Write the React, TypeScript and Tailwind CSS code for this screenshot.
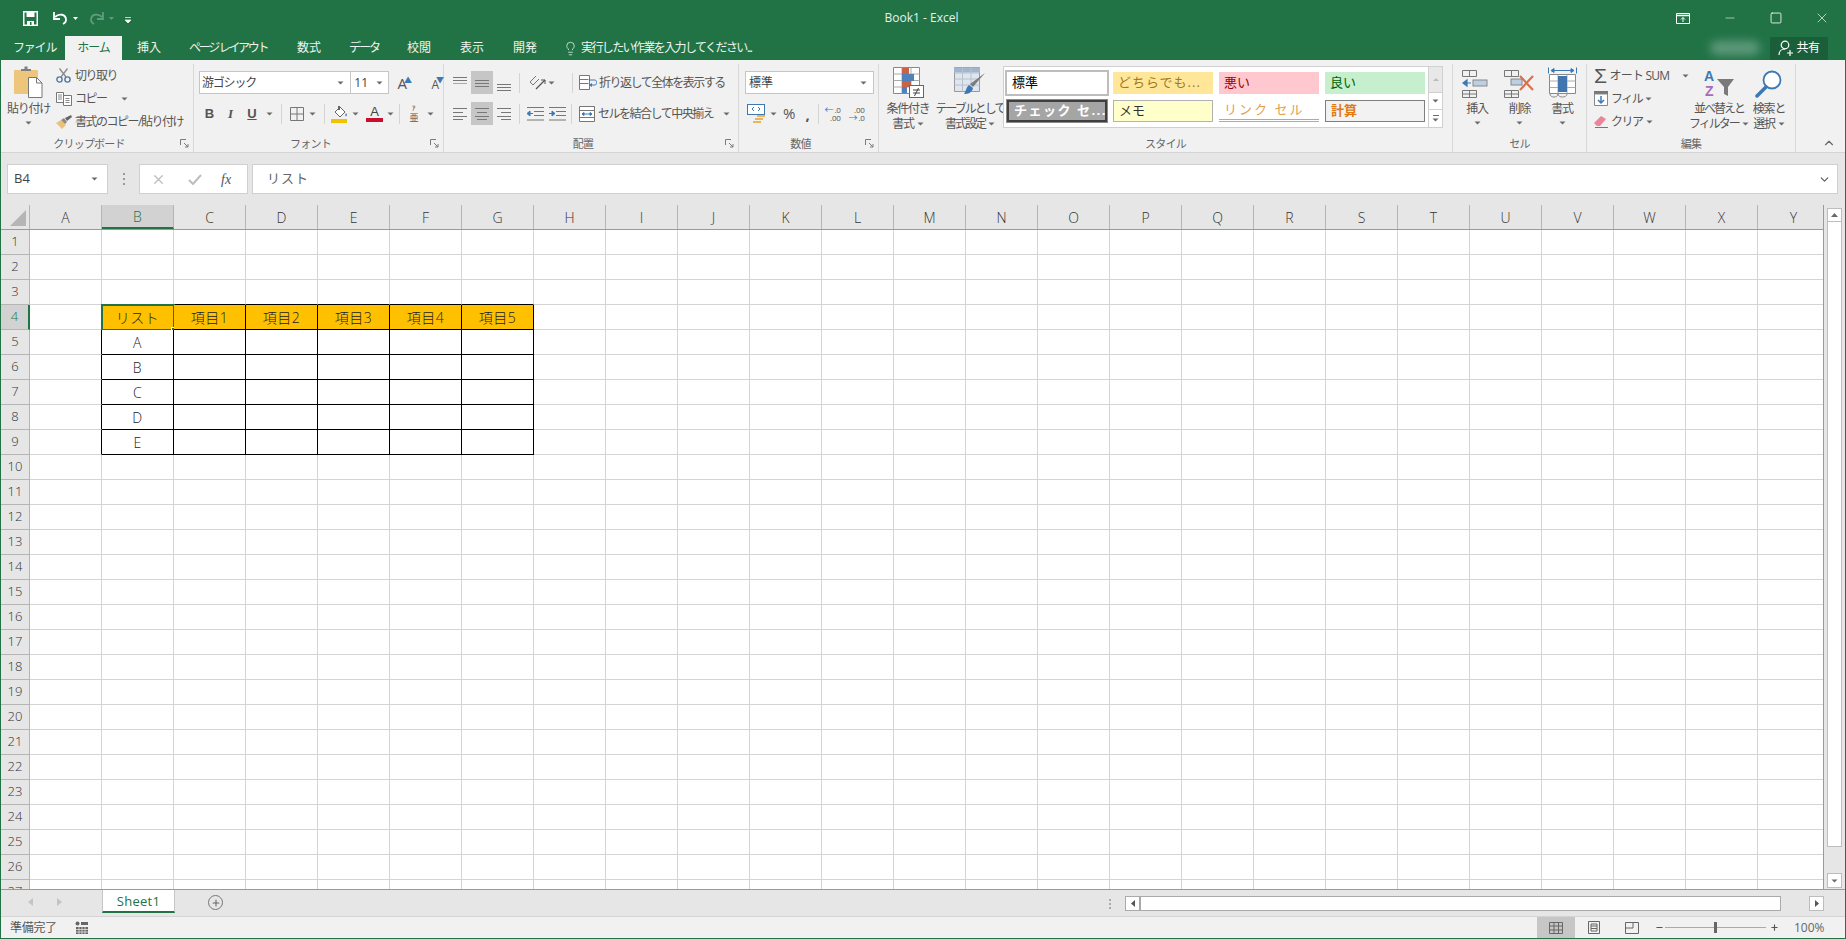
import type { ReactNode } from 'react';
import { ChevronDown, ChevronUp, Lightbulb, Minus, Plus, Square, X } from 'lucide-react';

const COLUMNS = 'ABCDEFGHIJKLMNOPQRSTUVWXY'.split('');
const ROWS = Array.from({ length: 27 }, (_, i) => i + 1);
const HEADERS = ['リスト', '項目1', '項目2', '項目3', '項目4', '項目5'];
const LIST_ITEMS = ['A', 'B', 'C', 'D', 'E'];

function Caret({ className = '' }: { className?: string }) {
  return (
    <svg width="7" height="4" viewBox="0 0 7 4" className={`shrink-0 ${className}`}>
      <path d="M0.5 0.5h6L3.5 3.5z" fill="#6a6a6a" />
    </svg>
  );
}

function Launcher() {
  return (
    <svg width="9" height="9" viewBox="0 0 9 9" className="absolute bottom-[4px] right-[4px]">
      <path d="M0.5 6V0.5H6M4 4l4 4M8 5v3H5" fill="none" stroke="#7a7a7a" strokeWidth="1" />
    </svg>
  );
}

function Group({
  className,
  label,
  launcher = false,
  children,
}: {
  className: string;
  label: string;
  launcher?: boolean;
  children: ReactNode;
}) {
  return (
    <div className={`relative flex h-[88px] shrink-0 flex-col border-r border-[#d8d8d8] ${className}`}>
      <div className="h-[72px] shrink-0">{children}</div>
      <div
        className={`flex flex-1 items-center justify-center text-[11px] tracking-[-0.8px] text-[#666] ${
          launcher ? 'pr-[16px]' : ''
        }`}
      >
        {label}
      </div>
      {launcher && <Launcher />}
    </div>
  );
}

function Sep({ className = 'ml-[5px]' }: { className?: string }) {
  return <div className={`h-[20px] w-px shrink-0 bg-[#d4d4d4] ${className}`} />;
}

function BigButton({
  icon,
  lines,
  className = '',
  caretBelow = false,
  tight = false,
}: {
  icon: ReactNode;
  lines: ReactNode[];
  className?: string;
  caretBelow?: boolean;
  tight?: boolean;
}) {
  return (
    <div className={`flex shrink-0 flex-col items-center ${className}`}>
      <div className="flex h-[34px] items-end justify-center">{icon}</div>
      <div
        className={`mt-[3px] flex flex-col items-center text-[12px] leading-[15px] text-[#555] ${
          tight ? 'tracking-[-2px]' : 'tracking-[-1.200px]'
        }`}
      >
        {lines.map((line, i) => (
          <div key={i} className="flex items-center gap-[3px] whitespace-nowrap">
            {line}
          </div>
        ))}
      </div>
      {caretBelow && <Caret className="mt-[5px]" />}
    </div>
  );
}

function AlignV({ pos }: { pos: 'top' | 'middle' | 'bottom' }) {
  const y = pos === 'top' ? [2, 5, 8] : pos === 'middle' ? [5, 8, 11] : [9, 12, 15];
  return (
    <svg width="14" height="16" viewBox="0 0 14 16">
      {y.map((v, i) => (
        <path key={v} d={`M0 ${v + 0.5}h14`} stroke={i === 2 && pos === 'top' ? '#aaa' : '#777'} strokeWidth="1" />
      ))}
    </svg>
  );
}

function AlignH({ pos }: { pos: 'left' | 'center' | 'right' }) {
  const rows =
    pos === 'left'
      ? ['M0 2.5h14', 'M0 6.5h10', 'M0 10.5h14', 'M0 13.5h10']
      : pos === 'center'
        ? ['M0 2.5h14', 'M2 6.5h10', 'M0 10.5h14', 'M2 13.5h10']
        : ['M0 2.5h14', 'M4 6.5h10', 'M0 10.5h14', 'M4 13.5h10'];
  return (
    <svg width="14" height="16" viewBox="0 0 14 16">
      {rows.map((d) => (
        <path key={d} d={d} stroke="#777" strokeWidth="1" />
      ))}
    </svg>
  );
}

function PasteIcon() {
  return (
    <svg width="29" height="32" viewBox="0 0 29 32">
      <rect x="0" y="4" width="24" height="24" rx="1" fill="#edc67c" />
      <path d="M7 5V3h3.5V0.5h3V3H17v2z" fill="#7f7f7f" />
      <path d="M14.5 11.5h8l5.5 5.5v14.5H14.5z" fill="#fff" stroke="#777" />
      <path d="M22.5 11.5V17H28" fill="none" stroke="#777" />
    </svg>
  );
}

function ScissorsIcon() {
  return (
    <svg width="15" height="15" viewBox="0 0 15 15">
      <path d="M5 9L11.500 0.500M10 9L3.500 0.500" stroke="#8a8a8a" strokeWidth="1.300" />
      <circle cx="3.500" cy="11.500" r="2.600" fill="none" stroke="#4f78a8" strokeWidth="1.400" />
      <circle cx="11.500" cy="11.500" r="2.600" fill="none" stroke="#4f78a8" strokeWidth="1.400" />
    </svg>
  );
}

function CopyIcon() {
  return (
    <svg width="16" height="14" viewBox="0 0 16 14">
      <path d="M0.500 0.500h7v10h-7zM7.500 3.500h8v10h-8z" fill="#fff" stroke="#777" />
      <path d="M2 3h4M2 5h4M2 7h4M9.500 6.500h4M9.500 8.500h4M9.500 10.500h4" stroke="#888" />
    </svg>
  );
}

function BrushIcon() {
  return (
    <svg width="16" height="14" viewBox="0 0 16 14">
      <path d="M0 8l5-3 5 5-4 4z" fill="#e9c27c" />
      <path d="M5 5l3-2 3 4-2 2z" fill="#8a8a8a" />
      <path d="M9 3l6-3 1 2-5 4z" fill="#666" />
    </svg>
  );
}

function FillColorIcon() {
  return (
    <svg width="18" height="18" viewBox="0 0 18 18">
      <path d="M4 7l5-5 5 5-5 5z" fill="#fff" stroke="#666" />
      <path d="M7 1h2v4H7z" fill="#666" />
      <path d="M15 8c1 1.500 1.500 2.500 0 3.500-1-1-1-2 0-3.500z" fill="#4f81bd" />
      <rect x="0" y="14" width="16" height="4" fill="#f2c200" />
    </svg>
  );
}

function OrientationIcon() {
  return (
    <svg width="18" height="16" viewBox="0 0 18 16">
      <path d="M2 7l6-6M5 10l6-6M2 7l3 3" stroke="#777" fill="none" />
      <path d="M8 14L17 5" stroke="#555" strokeWidth="1.200" />
      <path d="M13 5h4v4" stroke="#555" fill="none" />
    </svg>
  );
}

function IndentIcon({ increase = false }: { increase?: boolean }) {
  return (
    <svg width="17" height="14" viewBox="0 0 17 14">
      <path d="M0 0.500h17M7 4.500h10M7 8.500h10M0 13h17" stroke="#777" />
      <path
        d={increase ? 'M0 6.500h4M3 4l3 2.500L3 9z' : 'M6 6.500H2M3 4L0 6.500 3 9z'}
        stroke="#3d78b5"
        fill="#3d78b5"
      />
    </svg>
  );
}

function WrapIcon() {
  return (
    <svg width="18" height="16" viewBox="0 0 18 16">
      <path d="M0.500 0.500h10v14h-10z" fill="#fff" stroke="#777" />
      <path d="M0.500 4.500h9M0.500 8.500h9" stroke="#777" />
      <path d="M10 5h6c2 0 2 5 0 5h-4" fill="none" stroke="#3d78b5" />
      <path d="M13 8l-3 2 3 2z" fill="#3d78b5" />
    </svg>
  );
}

function MergeIcon() {
  return (
    <svg width="16" height="16" viewBox="0 0 16 16">
      <path d="M0.500 0.500h15v15h-15z" fill="#fff" stroke="#777" />
      <path d="M0.500 4.500h15M0.500 11.500h15" stroke="#777" />
      <path d="M3 8h10M3 8l2-1.500v3zM13 8l-2-1.500v3z" stroke="#3d78b5" fill="#3d78b5" />
    </svg>
  );
}

function CurrencyIcon() {
  return (
    <svg width="18" height="20" viewBox="0 0 18 20">
      <rect x="0.500" y="0.500" width="17" height="10" fill="#fff" stroke="#3d78b5" />
      <path d="M7 3l-2 2 2 2M11 3l2 2-2 2" fill="none" stroke="#3d78b5" />
      <rect x="10" y="11" width="8" height="2" fill="#e9b65e" />
      <rect x="8" y="14" width="8" height="2" fill="#e9b65e" />
      <rect x="6" y="17" width="8" height="2" fill="#e9b65e" />
    </svg>
  );
}

function DecimalIcon({ increase = false }: { increase?: boolean }) {
  return (
    <div className="relative flex h-[16px] w-[16px] flex-col items-end text-[8px] leading-[8px] tracking-[-0.2px] text-[#555]">
      <span className="flex items-center">
        {increase && <span className="mr-px text-[9px] leading-[8px] text-[#3d78b5]">←</span>}
        {increase ? '.0' : '.00'}
      </span>
      <span className="flex items-center">
        {!increase && <span className="mr-px text-[9px] leading-[8px] text-[#3d78b5]">→</span>}
        {increase ? '.00' : '.0'}
      </span>
    </div>
  );
}

function CondFormatIcon() {
  return (
    <svg width="31" height="31" viewBox="0 0 31 31">
      <path d="M0.500 0.500h26v26h-26z" fill="#fff" stroke="#888" />
      <path d="M9 0.500v26M18 0.500v26M0.500 7h26M0.500 13.500h26M0.500 20h26" stroke="#aaa" />
      <rect x="9" y="1" width="7" height="6" fill="#c8634a" />
      <rect x="9" y="7" width="12" height="7" fill="#4f81bd" />
      <rect x="9" y="14" width="9" height="6" fill="#c8634a" />
      <rect x="9" y="20" width="5" height="6" fill="#4f81bd" />
      <rect x="16.500" y="18.500" width="14" height="12" fill="#fff" stroke="#666" />
      <path d="M20 23h7M20 26h7M25.500 21l-4 8" stroke="#444" />
    </svg>
  );
}

function TableFormatIcon() {
  return (
    <svg width="32" height="31" viewBox="0 0 32 31">
      <path d="M0.500 0.500h25v24h-25z" fill="#dfe6ef" stroke="#999" />
      <path d="M0 0.500h26v5H0z" fill="#9fb6cf" />
      <path d="M8.500 0.500v24M17 0.500v24M0.500 6h25M0.500 12h25M0.500 18h25" stroke="#b8c2cd" />
      <path d="M31 6L19 20l-3-3z" fill="#7d7d7d" />
      <path d="M15 18l4 3c-1 5-5 6-9 6 2-2 2-7 5-9z" fill="#3d78b5" />
    </svg>
  );
}

function CellsIcon({ kind }: { kind: 'insert' | 'delete' }) {
  return (
    <svg width="31" height="28" viewBox="0 0 31 28">
      <path d="M0.500 0.500h14v6h-14zM7.500 0.500v6M0.500 20.500h14v7h-14zM7.500 20.500v7M0.500 24h14" fill="none" stroke="#777" />
      {kind === 'insert' ? (
        <>
          <rect x="11" y="10" width="14" height="6" fill="#bccfe3" stroke="#888" />
          <path d="M9 13H1M1 13l4-3v6z" stroke="#3d78b5" fill="#3d78b5" strokeWidth="1.200" />
        </>
      ) : (
        <>
          <rect x="7" y="9" width="11" height="6" fill="#bccfe3" stroke="#888" />
          <path d="M16 6l13 14M29 6L16 20" stroke="#d9714f" strokeWidth="2.200" />
        </>
      )}
    </svg>
  );
}

function CellFormatIcon() {
  return (
    <svg width="29" height="31" viewBox="0 0 29 31">
      <path d="M0.500 0.500v6M28.500 0.500v6M3 3.500h23M3 3.500l3-2v4zM26 3.500l-3-2v4z" fill="#3d78b5" stroke="#3d78b5" />
      <path d="M1.500 7.500h26v19h-26z" fill="#fff" stroke="#888" />
      <path d="M10 7.500v19M19 7.500v19M1.500 14h26M1.500 20.500h26" stroke="#aaa" />
      <rect x="10" y="9" width="9" height="16" fill="#4274ad" />
      <path d="M2 27c0 4 8 4 8 0M10 27c0 4 9 4 9 0" fill="none" stroke="#888" />
    </svg>
  );
}

function SortIcon() {
  return (
    <svg width="30" height="29" viewBox="0 0 30 29">
      <text x="0" y="12" fontSize="14" fontWeight="700" fontFamily="Liberation Sans" fill="#3d78b5">
        A
      </text>
      <text x="1" y="27" fontSize="14" fontWeight="700" fontFamily="Liberation Sans" fill="#a56cb8">
        Z
      </text>
      <path d="M13 10h17l-6 8v9l-4-2v-7z" fill="#7a7a7a" />
    </svg>
  );
}

function SearchIcon() {
  return (
    <svg width="28" height="28" viewBox="0 0 28 28">
      <circle cx="17" cy="10" r="8.500" fill="#fff" stroke="#3d78b5" strokeWidth="1.800" />
      <path d="M11 17L2 26" stroke="#3d78b5" strokeWidth="3.500" strokeLinecap="round" />
    </svg>
  );
}

function TitleBar() {
  return (
    <div className="grid h-[36px] grid-cols-[1fr_auto_1fr] items-center text-white">
      <div className="flex items-center pl-[22px]">
        <svg width="15" height="15" viewBox="0 0 15 15">
          <path d="M0.750 0.750h13.500v13.500H0.750z" fill="none" stroke="#fff" strokeWidth="1.500" />
          <path d="M3.500 1h8v5h-8zM4 10h7v4.500H4z" fill="#fff" />
          <rect x="7" y="11" width="1.500" height="3" fill="#217346" />
        </svg>
        <svg width="17" height="15" viewBox="0 0 17 15" className="ml-[14px]">
          <path d="M3 6c4-4 11-3 11 3 0 2-1 3-3 4" fill="none" stroke="#fff" strokeWidth="1.800" />
          <path d="M2 1v7h6" fill="none" stroke="#fff" strokeWidth="1.800" />
        </svg>
        <svg width="5" height="3" viewBox="0 0 5 3" className="ml-[4px]">
          <path d="M0 0h5L2.500 3z" fill="#fff" />
        </svg>
        <svg width="17" height="15" viewBox="0 0 17 15" className="ml-[10px]">
          <path d="M14 6C10 2 3 3 3 9c0 2 1 3 3 4" fill="none" stroke="#5f9b7e" strokeWidth="1.800" />
          <path d="M15 1v7H9" fill="none" stroke="#5f9b7e" strokeWidth="1.800" />
        </svg>
        <svg width="5" height="3" viewBox="0 0 5 3" className="ml-[4px]">
          <path d="M0 0h5L2.500 3z" fill="#5f9b7e" />
        </svg>
        <svg width="6" height="6" viewBox="0 0 6 6" className="ml-[11px] mt-[3px]">
          <path d="M0 0.500h6M0 3h6L3 6z" fill="#fff" stroke="#fff" strokeWidth="0.700" />
        </svg>
      </div>
      <div className="pr-[3px] text-[12px] text-[#e6f0ea]">Book1 - Excel</div>
      <div className="flex items-center justify-end">
        <svg width="14" height="11" viewBox="0 0 14 11" className="mr-[17px]">
          <path d="M0.500 0.500h13v10h-13z" fill="none" stroke="#fff" />
          <path d="M0.500 2.500h13" stroke="#fff" strokeWidth="1.500" />
          <path d="M7 9V4.500M5 6.500l2-2 2 2" fill="none" stroke="#fff" />
        </svg>
        <div className="flex w-[46px] justify-center">
          <Minus size={14} strokeWidth={1} />
        </div>
        <div className="flex w-[46px] justify-center">
          <Square size={12} strokeWidth={1.500} className="scale-[1.1]" />
        </div>
        <div className="flex w-[46px] justify-center">
          <X size={16} strokeWidth={1} />
        </div>
      </div>
    </div>
  );
}

function TabBar() {
  return (
    <div className="relative flex h-[24px] items-center text-[12px] text-[#eef5f0]">
      <span className="ml-[12px] w-[52px] tracking-[-1.200px]">ファイル</span>
      <span className="flex h-full w-[57px] items-center justify-center bg-[#f1f1f1] tracking-[-1px] text-[#217346]">
        ホーム
      </span>
      <span className="ml-[15px] w-[52px]">挿入</span>
      <span className="w-[108px] tracking-[-2.300px]">ページ レイアウト</span>
      <span className="w-[52px]">数式</span>
      <span className="w-[58px] tracking-[-2px]">データ</span>
      <span className="w-[53px]">校閲</span>
      <span className="w-[53px]">表示</span>
      <span className="w-[50px]">開発</span>
      <Lightbulb size={15} strokeWidth={1.200} className="mr-[3px]" />
      <span className="tracking-[-1.600px]">実行したい作業を入力してください...</span>
      <div className="ml-auto mr-[17px] flex h-[23px] items-center">
        <div className="mr-[10px] h-[14px] w-[50px] rounded-full bg-[#5f9a7c] blur-[5px]" />
        <div className="flex h-full w-[58px] items-center justify-center gap-[2px] bg-[#1b5e3a] text-white">
          <svg width="16" height="16" viewBox="0 0 16 16">
            <circle cx="7" cy="5" r="3.800" fill="none" stroke="#fff" strokeWidth="1.200" />
            <path d="M1 15c0-4 3-6 6-6M9 13h6M12 10v6" fill="none" stroke="#fff" strokeWidth="1.200" />
          </svg>
          <span className="tracking-[-0.500px]">共有</span>
        </div>
      </div>
    </div>
  );
}

function StyleCell({ className, children }: { className: string; children: ReactNode }) {
  return (
    <div className={`flex h-[22px] w-[100px] shrink-0 items-center overflow-hidden whitespace-nowrap pl-[5px] text-[13px] ${className}`}>
      {children}
    </div>
  );
}

function Ribbon() {
  const rowText = 'text-[12px] tracking-[-1.500px] text-[#555] whitespace-nowrap';
  return (
    <div className="relative flex h-[93px] border-b border-[#d4d4d4] bg-[#f1f1f1] pt-[4px]">
      <Group className="w-[193px]" label="クリップボード" launcher>
        <div className="flex">
          <BigButton icon={<PasteIcon />} lines={['貼り付け']} caretBelow className="w-[55px]" />
          <div className={`flex flex-col ${rowText}`}>
            <div className="flex h-[23px] items-center gap-[4px]">
              <ScissorsIcon />
              切り取り
            </div>
            <div className="flex h-[23px] items-center gap-[3px]">
              <CopyIcon />
              コピー
              <Caret className="ml-[11px]" />
            </div>
            <div className="flex h-[24px] items-center gap-[3px]">
              <BrushIcon />
              書式のコピー/貼り付け
            </div>
          </div>
        </div>
      </Group>

      <Group className="w-[250px]" label="フォント" launcher>
        <div className="pl-[5px] pt-[7px]">
          <div className="flex h-[23px] items-center">
            <div className="flex h-full w-[157px] items-center justify-between border border-[#c6c6c6] bg-white pl-[2px] pr-[6px] text-[12px] tracking-[-1.200px] text-[#444]">
              游ゴシック
              <Caret />
            </div>
            <div className="ml-[-1px] flex h-full w-[40px] items-center justify-between border border-[#c6c6c6] bg-white pl-[3px] pr-[5px] text-[12px] text-[#444]">
              11
              <Caret />
            </div>
            <div className="ml-[8px] flex w-[47px] justify-between pr-[4px] text-[#555]">
              <span className="relative text-[15px] leading-[18px]">
                A<span className="absolute right-[-5px] top-[-3px] text-[8px] text-[#3d78b5]">▲</span>
              </span>
              <span className="relative mt-[3px] text-[12px] leading-[15px]">
                A<span className="absolute right-[-5px] top-[-5px] text-[8px] text-[#3d78b5]">▼</span>
              </span>
            </div>
          </div>
          <div className="mt-[8px] flex h-[23px] items-center font-['Liberation_Serif',serif] text-[13px] text-[#555]">
            <span className="w-[21px] text-center font-['Liberation_Sans',sans-serif] font-bold">B</span>
            <span className="w-[21px] text-center font-bold italic">I</span>
            <span className="w-[22px] text-center font-['Liberation_Sans',sans-serif] font-bold underline">U</span>
            <Caret className="ml-[3px]" />
            <Sep className="ml-[8px]" />
            <svg width="14" height="14" viewBox="0 0 14 14" className="ml-[8px]">
              <path d="M0.500 0.500h13v13H0.500zM7 0.500v13M0.500 7h13" fill="none" stroke="#777" />
            </svg>
            <Caret className="ml-[5px]" />
            <Sep className="ml-[8px]" />
            <div className="ml-[6px]">
              <FillColorIcon />
            </div>
            <Caret className="ml-[3px]" />
            <div className="ml-[7px] flex w-[17px] flex-col items-center font-['Liberation_Sans',sans-serif] text-[13px] leading-[13px] text-[#444]">
              A<span className="h-[4px] w-full bg-[#c8102e]" />
            </div>
            <Caret className="ml-[4px]" />
            <Sep className="ml-[5px]" />
            <div className="ml-[8px] flex w-[12px] flex-col items-center text-[7px] leading-[7px] text-[#555]">
              <span>ｱ</span>
              <span className="font-['Noto_Sans_CJK_JP',sans-serif] text-[9px] leading-[9px]">亜</span>
            </div>
            <Caret className="ml-[7px]" />
          </div>
        </div>
      </Group>

      <Group className="w-[295px]" label="配置" launcher>
        <div className="pl-[9px] pt-[7px]">
          <div className="flex h-[23px] items-center">
            <div className="flex w-[18px] justify-start"><AlignV pos="top" /></div>
            <div className="flex h-full w-[22px] items-center justify-center bg-[#c6c6c6]"><AlignV pos="middle" /></div>
            <div className="ml-[4px] flex w-[14px] justify-start"><AlignV pos="bottom" /></div>
            <Sep className="ml-[8px]" />
            <div className="ml-[8px]"><OrientationIcon /></div>
            <Caret className="ml-[2px]" />
            <Sep className="ml-[17px]" />
            <div className="ml-[6px] mr-[2px]"><WrapIcon /></div>
            <span className={rowText}>折り返して全体を表示する</span>
          </div>
          <div className="mt-[8px] flex h-[23px] items-center">
            <div className="flex w-[18px] justify-start"><AlignH pos="left" /></div>
            <div className="flex h-full w-[22px] items-center justify-center bg-[#c6c6c6]"><AlignH pos="center" /></div>
            <div className="ml-[4px] flex w-[14px] justify-start"><AlignH pos="right" /></div>
            <Sep className="ml-[8px]" />
            <div className="ml-[7px]"><IndentIcon /></div>
            <div className="ml-[5px]"><IndentIcon increase /></div>
            <Sep className="ml-[5px]" />
            <div className="ml-[7px] mr-[3px]"><MergeIcon /></div>
            <span className={rowText}>セルを結合して中央揃え</span>
            <Caret className="ml-[10px]" />
          </div>
        </div>
      </Group>

      <Group className="w-[140px]" label="数値" launcher>
        <div className="pl-[6px] pt-[7px]">
          <div className="flex h-[23px] w-[129px] items-center justify-between border border-[#c6c6c6] bg-white pl-[3px] pr-[6px] text-[12px] text-[#444]">
            標準
            <Caret />
          </div>
          <div className="mt-[8px] flex h-[23px] items-center pl-[2px]">
            <CurrencyIcon />
            <Caret className="ml-[5px]" />
            <span className="ml-[6px] text-[15px] text-[#555]">%</span>
            <span className="ml-[10px] text-[15px] font-bold leading-[12px] text-[#555]">,</span>
            <Sep className="ml-[8px]" />
            <div className="ml-[6px]"><DecimalIcon increase /></div>
            <div className="ml-[8px]"><DecimalIcon /></div>
          </div>
        </div>
      </Group>

      <Group className="w-[574px]" label="スタイル">
        <div className="flex">
          <BigButton
            icon={<CondFormatIcon />}
            lines={['条件付き', <>書式<Caret /></>]}
            className="w-[58px]"
          />
          <BigButton
            icon={<TableFormatIcon />}
            lines={['テーブルとして', <>書式設定<Caret /></>]}
            className="w-[66px]"
            tight
          />
          <div className="mt-[2px] flex h-[62px]">
            <div className="flex w-[426px] flex-wrap content-start gap-x-[6px] gap-y-[6px] border border-[#d0d0d0] bg-white pl-[3px] pt-[5px]">
              <StyleCell className="outline-2 outline-[#bdbdbd] bg-white text-black">標準</StyleCell>
              <StyleCell className="bg-[#ffe699] text-[#9c7a1f] tracking-[1px]">どちらでも...</StyleCell>
              <StyleCell className="bg-[#ffc7ce] text-[#9c0006]">悪い</StyleCell>
              <StyleCell className="bg-[#c6efce] text-[#006100]">良い</StyleCell>
              <StyleCell className="border-2 border-[#3f3f3f] bg-[#a5a5a5] font-bold tracking-[1.500px] text-white outline outline-[#8a8a8a]">
                チェック セ...
              </StyleCell>
              <StyleCell className="border border-[#b2b2b2] bg-[#ffffcc] text-[#333]">メモ</StyleCell>
              <StyleCell className="border-b-[3px] border-double border-[#e9a23b] tracking-[2px] text-[#e0a050]">
                リンク セル
              </StyleCell>
              <StyleCell className="border border-[#7f7f7f] bg-[#f2f2f2] font-bold text-[#e07b10]">計算</StyleCell>
            </div>
            <div className="ml-[-1px] flex w-[15px] flex-col border border-[#d0d0d0] bg-white">
              <div className="flex h-[25px] items-center justify-center bg-[#e8e8e8]">
                <svg width="6" height="3" viewBox="0 0 6 3"><path d="M0 3h6L3 0z" fill="#bbb" /></svg>
              </div>
              <div className="flex h-[18px] items-center justify-center border-y border-[#d0d0d0]"><Caret /></div>
              <div className="flex flex-1 flex-col items-center justify-center gap-[2px]">
                <span className="h-px w-[6px] bg-[#6a6a6a]" />
                <Caret />
              </div>
            </div>
          </div>
        </div>
      </Group>

      <Group className="w-[134px]" label="セル">
        <div className="flex pl-[3px]">
          <BigButton icon={<CellsIcon kind="insert" />} lines={['挿入']} caretBelow className="w-[42px]" />
          <BigButton icon={<CellsIcon kind="delete" />} lines={['削除']} caretBelow className="w-[43px]" />
          <BigButton icon={<CellFormatIcon />} lines={['書式']} caretBelow className="w-[42px]" />
        </div>
      </Group>

      <Group className="w-[209px]" label="編集">
        <div className="flex pl-[7px]">
          <div className={`flex w-[95px] flex-col ${rowText}`}>
            <div className="flex h-[23px] items-center gap-[4px]">
              <span className="font-['Liberation_Sans',sans-serif] text-[21px] leading-[20px] text-[#555]">Σ</span>
              <span className="tracking-[-0.800px]">オート SUM</span>
              <Caret className="ml-[9px]" />
            </div>
            <div className="flex h-[23px] items-center gap-[3px]">
              <svg width="14" height="15" viewBox="0 0 14 15">
                <rect x="0" y="0" width="14" height="3" fill="#777" />
                <path d="M0.500 3h13v11.500H0.500z" fill="#fff" stroke="#888" />
                <path d="M7 5v7M4 9l3 3 3-3" fill="none" stroke="#3d78b5" strokeWidth="1.500" />
              </svg>
              フィル
              <Caret />
            </div>
            <div className="flex h-[23px] items-center gap-[3px]">
              <svg width="14" height="13" viewBox="0 0 14 13">
                <path d="M0 8l7-7 5 3-6 7H3z" fill="#e8869a" />
                <path d="M1 12.500h13" stroke="#777" />
              </svg>
              クリア
              <Caret />
            </div>
          </div>
          <BigButton
            icon={<SortIcon />}
            lines={['並べ替えと', <>フィルター<Caret /></>]}
            className="w-[60px]"
            tight
          />
          <BigButton
            icon={<SearchIcon />}
            lines={['検索と', <>選択<Caret /></>]}
            className="w-[40px]"
          />
        </div>
      </Group>
      <ChevronUp size={14} strokeWidth={2} className="absolute bottom-[2px] right-[9px] text-[#666]" />
    </div>
  );
}

function FormulaBar() {
  return (
    <div className="flex h-[52px] bg-[#e6e6e6] pl-[6px] pr-[7px] pt-[11px]">
      <div className="flex h-[30px] w-[101px] items-center justify-between border border-[#d0d0d0] bg-white pl-[6px] pr-[9px] text-[13px] text-[#444]">
        B4
        <Caret />
      </div>
      <div className="flex h-[30px] w-[31px] flex-col items-center justify-center gap-[3px]">
        <span className="h-[2px] w-[2px] bg-[#999]" />
        <span className="h-[2px] w-[2px] bg-[#999]" />
        <span className="h-[2px] w-[2px] bg-[#999]" />
      </div>
      <div className="flex h-[30px] w-[109px] items-center border border-[#d0d0d0] bg-white pl-[11px] text-[#bdbdbd]">
        <X size={15} strokeWidth={2} />
        <svg width="14" height="11" viewBox="0 0 14 11" className="ml-[22px]">
          <path d="M1 6l4 4 8-9" fill="none" stroke="#bdbdbd" strokeWidth="2" />
        </svg>
        <span className="ml-[19px] font-['Liberation_Serif',serif] text-[14px] italic text-[#555]">fx</span>
      </div>
      <div className="ml-[4px] flex h-[30px] flex-1 items-center justify-between border border-[#d0d0d0] bg-white pl-[14px] pr-[6px] text-[13px] tracking-[1px] text-[#666]">
        リスト
        <ChevronDown size={13} strokeWidth={2.500} className="text-[#666]" />
      </div>
    </div>
  );
}

function cellClass(row: number, col: number) {
  const inRows = row >= 4 && row <= 9;
  const inCols = col >= 1 && col <= 6;
  const right = inRows && col <= 6 ? 'border-r-black' : 'border-r-[#d4d4d4]';
  const bottom = inCols && row >= 3 && row <= 9 ? 'border-b-black' : 'border-b-[#d4d4d4]';
  const bg = row === 4 && inCols ? 'bg-[#ffc000]' : 'bg-white';
  return `${right} ${bottom} ${bg}`;
}

function cellText(row: number, col: number) {
  if (row === 4 && col >= 1 && col <= 6) return HEADERS[col - 1];
  if (row >= 5 && row <= 9 && col === 1) return LIST_ITEMS[row - 5];
  return '';
}

function Sheet() {
  return (
    <div className="flex h-[684px] bg-[#e6e6e6]">
      <div className="w-[1823px] shrink-0 overflow-hidden border-r border-[#9a9a9a]">
        <div className="flex h-[25px] w-max border-b border-[#9a9a9a] text-[14px] font-light text-[#333]">
          <div className="flex h-full w-[29px] shrink-0 items-end justify-end border-r border-[#b5b5b5] p-[3px]">
            <div className="h-0 w-0 border-b-[16px] border-l-[16px] border-b-[#b5b5b5] border-l-transparent" />
          </div>
          {COLUMNS.map((c) => (
            <div
              key={c}
              className={`flex h-full w-[72px] shrink-0 items-center justify-center border-r border-[#b5b5b5] ${
                c === 'B' ? 'border-b-2 border-b-[#217346] bg-[#d2d2d2] text-[#217346]' : ''
              }`}
            >
              {c}
            </div>
          ))}
        </div>
        {ROWS.map((row) => (
          <div key={row} className="flex h-[25px] w-max">
            <div
              className={`flex w-[29px] shrink-0 items-center justify-center border-b border-r border-[#b5b5b5] text-[13px] font-light text-[#333] ${
                row === 4 ? 'border-r-2 border-r-[#217346] bg-[#d2d2d2] text-[#217346]' : ''
              }`}
            >
              {row}
            </div>
            {COLUMNS.map((c, col) => (
              <div
                key={c}
                className={`relative flex w-[72px] shrink-0 items-center justify-center border-b border-r text-[14px] font-light tracking-[0.500px] text-[#222] ${cellClass(row, col)}`}
              >
                {cellText(row, col)}
                {row === 4 && col === 1 && (
                  <div className="absolute bottom-[-2px] left-[-1px] right-[-2px] top-[-1px] border-2 border-[#217346]">
                    <div className="absolute bottom-[-3px] right-[-3px] h-[5px] w-[5px] border border-white bg-[#217346]" />
                  </div>
                )}
              </div>
            ))}
          </div>
        ))}
      </div>
      <div className="ml-[3px] mt-[3px] flex w-[15px] flex-col pb-px">
        <div className="flex h-[14px] items-center justify-center border border-[#bdbdbd] bg-white">
          <svg width="7" height="4" viewBox="0 0 7 4"><path d="M0 4h7L3.500 0z" fill="#6a6a6a" /></svg>
        </div>
        <div className="h-[625px] border-x border-b border-[#bdbdbd] bg-white" />
        <div className="flex-1" />
        <div className="flex h-[15px] items-center justify-center border border-[#bdbdbd] bg-white">
          <Caret />
        </div>
      </div>
    </div>
  );
}

function SheetTabs() {
  return (
    <div className="flex h-[27px] items-start border-t border-[#9a9a9a] bg-[#e6e6e6]">
      <div className="flex h-[23px] w-[101px] shrink-0 items-center pl-[27px]">
        <svg width="5" height="8" viewBox="0 0 5 8"><path d="M5 0v8L0 4z" fill="#c4c4c4" /></svg>
        <svg width="5" height="8" viewBox="0 0 5 8" className="ml-[24px]"><path d="M0 0v8l5-4z" fill="#c4c4c4" /></svg>
      </div>
      <div className="flex h-[23px] w-[73px] shrink-0 items-center justify-center border-b-2 border-x border-x-[#c6c6c6] border-b-[#217346] bg-white pt-[3px] text-[13px] tracking-[0.300px] text-[#217346]">
        Sheet1
      </div>
      <div className="ml-[33px] mt-[5px] flex h-[15px] w-[15px] items-center justify-center rounded-full border border-[#777] text-[#666]">
        <Plus size={10} strokeWidth={2.500} />
      </div>
      <div className="ml-auto mr-[21px] mt-[6px] flex h-[15px] items-center">
        <div className="mr-[14px] flex flex-col gap-[2px]">
          <span className="h-[2px] w-[2px] bg-[#aaa]" />
          <span className="h-[2px] w-[2px] bg-[#aaa]" />
          <span className="h-[2px] w-[2px] bg-[#aaa]" />
        </div>
        <div className="flex h-full w-[15px] items-center justify-center border border-[#aaa] bg-white">
          <svg width="4" height="7" viewBox="0 0 4 7"><path d="M4 0v7L0 3.500z" fill="#555" /></svg>
        </div>
        <div className="h-full w-[641px] border border-[#aaa] bg-white" />
        <div className="h-full w-[28px]" />
        <div className="flex h-full w-[15px] items-center justify-center border border-[#bdbdbd] bg-white">
          <svg width="4" height="7" viewBox="0 0 4 7"><path d="M0 0v7l4-3.500z" fill="#555" /></svg>
        </div>
      </div>
    </div>
  );
}

function StatusBar() {
  return (
    <div className="flex h-[22px] items-center border-t border-[#d4d4d4] bg-[#f1f1f1] text-[12px] text-[#555]">
      <span className="ml-[9px] tracking-[-0.300px]">準備完了</span>
      <svg width="13" height="13" viewBox="0 0 13 13" className="ml-[18px]">
        <circle cx="2.500" cy="2.500" r="2" fill="#666" />
        <path d="M6 1h7v3H6zM1 6h12v7H1z" fill="#666" />
        <path d="M1 8.500h12M1 11h12M4 6v7M7 6v7M10 6v7" stroke="#f1f1f1" strokeWidth="0.700" />
      </svg>
      <div className="ml-auto flex h-full items-center pr-[18px]">
        <div className="flex h-full w-[38px] items-center justify-center bg-[#c6c6c6]">
          <svg width="14" height="12" viewBox="0 0 14 12">
            <path d="M0.500 0.500h13v11h-13zM5 0.500v11M9.500 0.500v11M0.500 4h13M0.500 8h13" fill="none" stroke="#666" />
          </svg>
        </div>
        <div className="flex w-[38px] justify-center">
          <svg width="12" height="13" viewBox="0 0 12 13">
            <path d="M0.500 0.500h11v12h-11zM3 3h6v7H3zM3 5h6M3 7.500h6" fill="none" stroke="#666" />
          </svg>
        </div>
        <div className="flex w-[38px] justify-center">
          <svg width="14" height="12" viewBox="0 0 14 12">
            <path d="M0.500 0.500h13v11h-13zM8 0.500v5.500H0.500" fill="none" stroke="#666" />
          </svg>
        </div>
        <Minus size={9} strokeWidth={3} className="ml-[4px] text-[#555]" />
        <div className="relative ml-px flex h-[12px] w-[101px] items-center justify-center">
          <div className="h-px w-full bg-[#aaa]" />
          <div className="absolute h-[11px] w-[3px] bg-[#666]" />
        </div>
        <Plus size={9} strokeWidth={3} className="ml-[4px] text-[#555]" />
        <span className="ml-[15px] w-[33px] text-[12px] text-[#666]">100%</span>
      </div>
    </div>
  );
}

export default function App() {
  return (
    <div className="h-[939px] w-[1846px] overflow-hidden border-x border-b border-[#217346] bg-[#217346] font-['Open_Sans','Noto_Sans_CJK_JP',sans-serif]">
      <TitleBar />
      <TabBar />
      <Ribbon />
      <FormulaBar />
      <Sheet />
      <SheetTabs />
      <StatusBar />
    </div>
  );
}
